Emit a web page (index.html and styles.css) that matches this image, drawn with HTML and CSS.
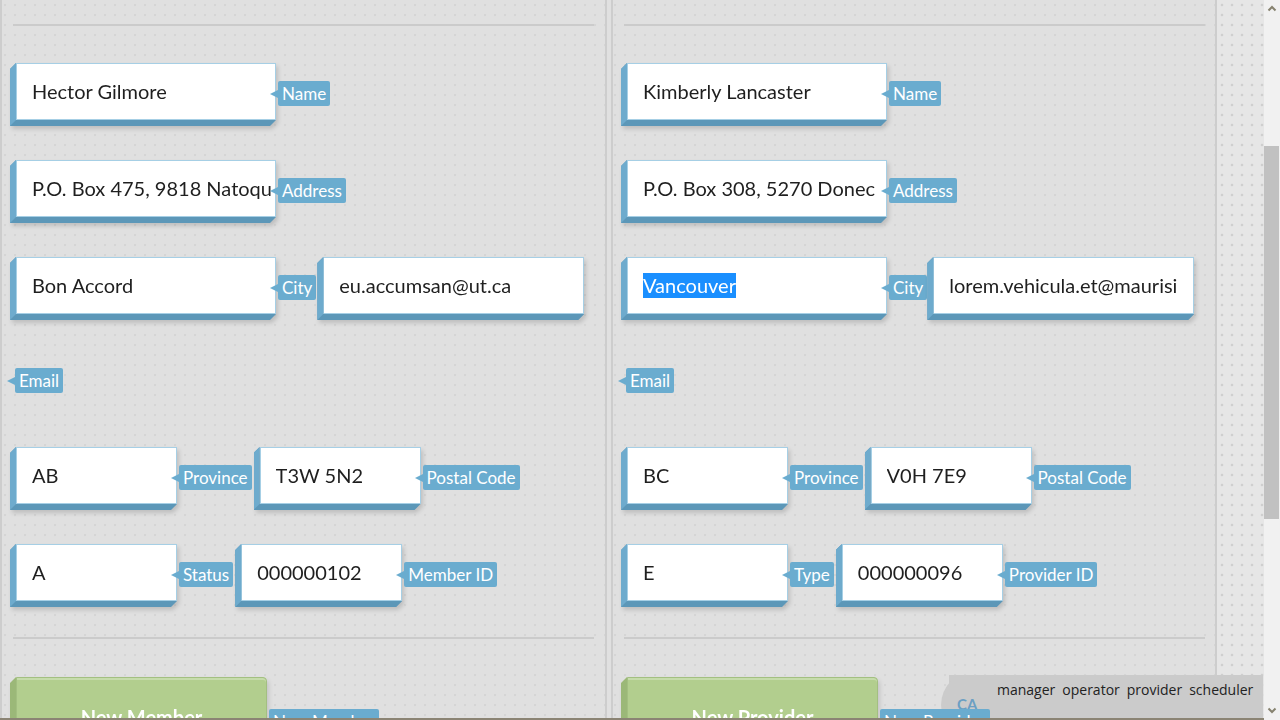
FILE: index.html
```html
<!DOCTYPE html>
<html>
<head>
<meta charset="utf-8">
<title>Members and Providers</title>
<link rel="stylesheet" href="styles.css">
</head>
<body>
<div class="screen">
  <div class="main">
    <section class="panel panel-left">
      <div class="hr"></div>
      <div class="row first">
        <div class="box wide"><span class="val">Hector Gilmore</span></div>
        <span class="tag">Name</span>
      </div>
      <div class="row">
        <div class="box wide tight"><span class="val">P.O. Box 475, 9818 Natoque St.</span></div>
        <span class="tag">Address</span>
      </div>
      <div class="row">
        <div class="box wide"><span class="val">Bon Accord</span></div>
        <span class="tag">City</span>
        <div class="box mail"><span class="val">eu.accumsan@ut.ca</span></div>
      </div>
      <div class="row solo">
        <span class="tag">Email</span>
      </div>
      <div class="row">
        <div class="box narrow"><span class="val">AB</span></div>
        <span class="tag">Province</span>
        <div class="box narrow next"><span class="val">T3W 5N2</span></div>
        <span class="tag">Postal Code</span>
      </div>
      <div class="row">
        <div class="box narrow"><span class="val">A</span></div>
        <span class="tag">Status</span>
        <div class="box narrow next"><span class="val">000000102</span></div>
        <span class="tag">Member ID</span>
      </div>
      <div class="hr lower"></div>
      <div class="row actions">
        <div class="btn">New Member</div>
        <span class="tag">New Member</span>
      </div>
    </section>
    <div class="divider"></div>
    <section class="panel panel-right">
      <div class="hr"></div>
      <div class="row first">
        <div class="box wide"><span class="val">Kimberly Lancaster</span></div>
        <span class="tag">Name</span>
      </div>
      <div class="row">
        <div class="box wide tight"><span class="val">P.O. Box 308, 5270 Donec</span></div>
        <span class="tag">Address</span>
      </div>
      <div class="row">
        <div class="box wide"><span class="val"><span class="sel">Vancouver</span></span></div>
        <span class="tag">City</span>
        <div class="box mail mail-r"><span class="val">lorem.vehicula.et@maurisinterdum.org</span></div>
      </div>
      <div class="row solo">
        <span class="tag">Email</span>
      </div>
      <div class="row">
        <div class="box narrow"><span class="val">BC</span></div>
        <span class="tag">Province</span>
        <div class="box narrow next"><span class="val">V0H 7E9</span></div>
        <span class="tag">Postal Code</span>
      </div>
      <div class="row">
        <div class="box narrow"><span class="val">E</span></div>
        <span class="tag">Type</span>
        <div class="box narrow next"><span class="val">000000096</span></div>
        <span class="tag">Provider ID</span>
      </div>
      <div class="hr lower"></div>
      <div class="row actions">
        <div class="btn">New Provider</div>
        <span class="tag">New Provider</span>
      </div>
    </section>
    <div class="vline"></div>
    <div class="strip"></div>
  </div>
  <div class="scrollbar">
    <svg class="arrow-up" width="10" height="8" viewBox="0 0 10 8"><polyline points="1.5,6.5 5,3 8.5,6.5" fill="none" stroke="#86826f" stroke-width="2"/></svg>
    <div class="thumb"></div>
    <svg class="arrow-down" width="10" height="8" viewBox="0 0 10 8"><polyline points="1.5,1.5 5,5 8.5,1.5" fill="none" stroke="#86826f" stroke-width="2"/></svg>
  </div>
  <div class="overlay">
    <div class="avatar">CA</div>
    <div class="roles"><span>manager</span><span>operator</span><span>provider</span><span>scheduler</span></div>
  </div>
  <div class="bottombar"></div>
</div>
</body>
</html>
```
FILE: styles.css
```css
* { box-sizing: border-box; }
html, body { margin: 0; padding: 0; width: 1280px; height: 720px; overflow: hidden; }
body { font-family: Lato, "Liberation Sans", sans-serif; background: #e0e0e0; }

.screen { position: relative; width: 1280px; height: 720px; display: flex; overflow: hidden; }

.main {
  display: flex;
  width: 1264px;
  height: 720px;
  background-color: #e0e0e0;
  background-image: radial-gradient(circle at 5px 5px, #d5d5d5 1px, rgba(213,213,213,0) 1.6px);
  background-size: 10px 10px;
}

.panel { padding-top: 24px; flex: none; }
.panel-left { width: 605px; border-left: 2px solid #cdcdcd; padding-left: 11px; padding-right: 11px; }
.divider { width: 8px; flex: none; border-left: 2px solid #cdcdcd; border-right: 2px solid #cdcdcd; }
.panel-right { width: 602px; padding-left: 11px; padding-right: 10px; }
.vline { width: 2px; flex: none; background: #cdcdcd; }
.strip {
  flex: 1;
  background-color: #e6e6e6;
  background-image: radial-gradient(circle at 5px 5px, #cfcfcf 1px, rgba(207,207,207,0) 1.7px);
  background-size: 10px 10px;
}

.hr { height: 0; border-top: 2px solid #cbcbcb; }
.hr.lower { margin-top: 36px; }

.row { display: flex; align-items: flex-start; height: 57px; margin-top: 40px; padding-left: 3px; }
.row.first { margin-top: 37px; }
.row.solo { margin-top: 36px; padding-left: 0; }
.row.actions { margin-top: 38px; height: 84px; }

.box {
  position: relative;
  flex: none;
  height: 57px;
  background: #fff;
  border: 1px solid #a6cfe5;
  padding: 0 16px 0 15px;
  font-size: 20px;
  line-height: 55px;
  color: #1f1f1f;
  white-space: nowrap;
  filter: drop-shadow(2px 3px 2px rgba(0,0,0,0.15));
}
.box .val { display: block; overflow: hidden; }
.box::before {
  content: "";
  position: absolute;
  left: -7px;
  top: -1px;
  width: calc(100% + 8px);
  height: calc(100% + 8px);
  background: #5c97b8;
  clip-path: polygon(6px 0, 0 6px, 0 100%, calc(100% - 6px) 100%, 100% calc(100% - 6px), 6px calc(100% - 6px));
  z-index: -1;
}
.box::after {
  content: "";
  position: absolute;
  left: -7px;
  top: -1px;
  width: 6px;
  height: calc(100% + 8px);
  background: #6eabcd;
  clip-path: polygon(100% 0, 0 6px, 0 100%, 100% calc(100% - 6px));
  z-index: -1;
}
.wide { width: 260px; }
.narrow { width: 161px; }
.box.tight { padding-right: 3px; }
.mail { width: 261px; margin-left: 7px; }
.mail-r { margin-left: 6px; }
.next { margin-left: 8px; }

.sel { background: #1a8fff; color: #fff; display: inline-block; line-height: 25px; }

.tag {
  position: relative;
  flex: none;
  height: 25px;
  margin-top: 18px;
  margin-left: 2px;
  padding: 0 4px;
  background: #6aaccf;
  color: #fff;
  font-size: 17px;
  line-height: 25px;
  border-radius: 2px;
  white-space: nowrap;
}
.tag::before {
  content: "";
  position: absolute;
  left: -8px;
  top: 50%;
  margin-top: -4px;
  border-style: solid;
  border-width: 4px 8px 4px 0;
  border-color: transparent #6aaccf transparent transparent;
}
.actions .tag { margin-top: 32px; z-index: 2; }

.btn {
  position: relative;
  flex: none;
  width: 251px;
  height: 84px;
  background: #b2ce8e;
  border: 1px solid #a3bf81;
  border-radius: 0 4px 0 0;
  box-shadow: inset 0 2px 0 #c6dcab;
  color: #fff;
  font-size: 20px;
  font-weight: 700;
  line-height: 79px;
  text-align: center;
  filter: drop-shadow(2px 3px 2px rgba(0,0,0,0.12));
}
.btn::after {
  content: "";
  position: absolute;
  left: -7px;
  top: -1px;
  width: 6px;
  height: calc(100% + 8px);
  background: #9bb878;
  clip-path: polygon(100% 0, 0 6px, 0 100%, 100% calc(100% - 6px));
}

.scrollbar { position: relative; width: 16px; flex: none; height: 720px; background: #f1f1f1; }
.thumb { position: absolute; left: 0; top: 146px; width: 15px; height: 373px; background: #c1c1c1; }
.arrow-up { position: absolute; left: 3px; top: 4px; }
.arrow-down { position: absolute; left: 3px; top: 707px; }

.overlay {
  position: absolute;
  left: 949px;
  top: 675px;
  width: 314px;
  height: 45px;
  background: #cbcbcb;
  z-index: 1;
}
.avatar {
  position: absolute;
  left: -8px;
  top: -4px;
  width: 68px;
  height: 68px;
  border-radius: 50%;
  background: #cbcbcb;
  clip-path: inset(4px 0 0 0);
  padding: 26px 0 0 16px;
  font-size: 15px;
  font-weight: 700;
  line-height: 15px;
  color: #6c9fc3;
}
.roles {
  position: absolute;
  left: 48px;
  top: 5px;
  font-family: "Open Sans", "DejaVu Sans", sans-serif;
  font-size: 14px;
  line-height: 20px;
  color: #222;
  white-space: nowrap;
}
.roles span { margin-right: 7px; }
.roles span:last-child { margin-right: 0; }

.bottombar {
  position: absolute;
  left: 0;
  bottom: 0;
  width: 1264px;
  height: 2px;
  background: #8b8474;
  z-index: 3;
}
```
